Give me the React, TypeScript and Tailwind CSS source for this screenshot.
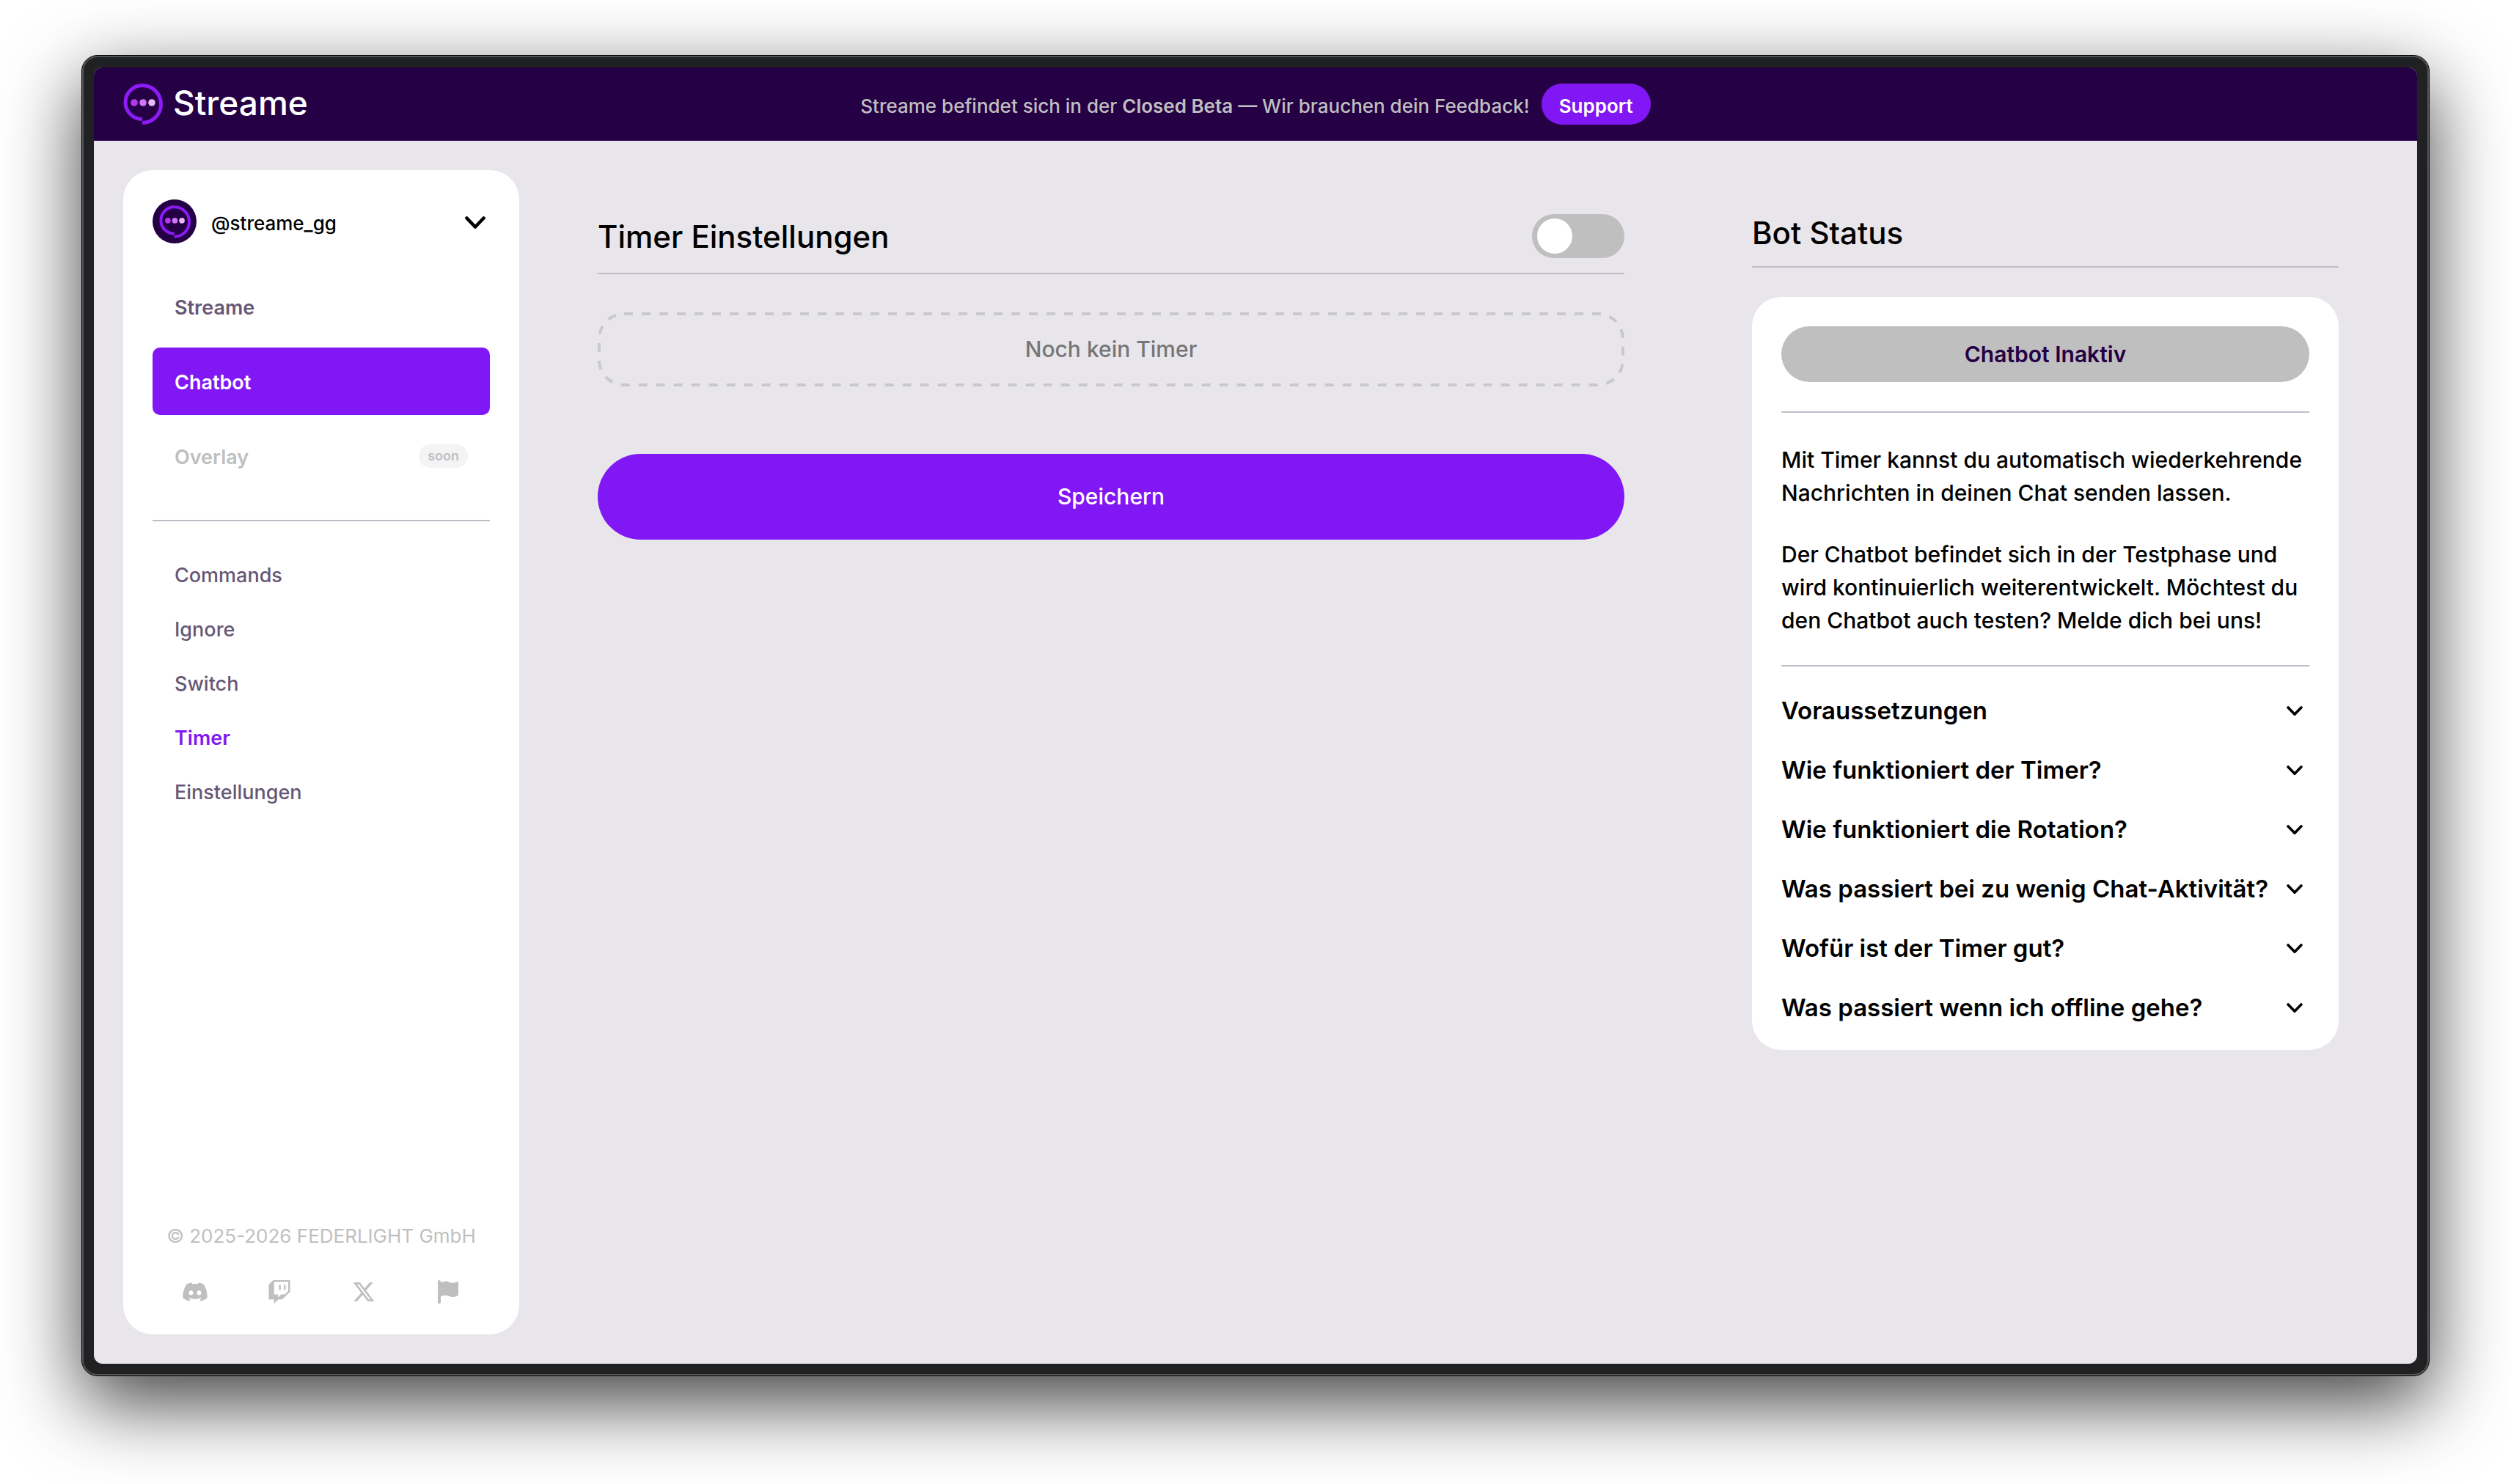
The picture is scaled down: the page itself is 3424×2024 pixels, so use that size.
import React, { useState } from 'react';
import { FaDiscord, FaTwitch, FaXTwitter, FaFlag } from 'react-icons/fa6';

const mainNav = [
  { label: 'Streame' },
  { label: 'Chatbot', active: true },
  { label: 'Overlay', soon: true },
];

const subNav = ['Commands', 'Ignore', 'Switch', 'Timer', 'Einstellungen'];

const socials = [
  { label: 'Discord', icon: FaDiscord, size: 'h-9 w-auto' },
  { label: 'Twitch', icon: FaTwitch, size: 'h-8 w-auto' },
  { label: 'X', icon: FaXTwitter, size: 'h-8 w-auto' },
  { label: 'Feedback', icon: FaFlag, size: 'h-8 w-auto' },
];

const faqs = [
  'Voraussetzungen',
  'Wie funktioniert der Timer?',
  'Wie funktioniert die Rotation?',
  'Was passiert bei zu wenig Chat-Aktivität?',
  'Wofür ist der Timer gut?',
  'Was passiert wenn ich offline gehe?',
];

const Logo: React.FC<{ className?: string }> = ({ className }) => (
  <svg viewBox="0 0 54 56" fill="none" className={className} aria-hidden="true">
    <path d="M26 2.5a23 23 0 0 0 0 46" stroke="#8c1bf6" strokeWidth="5" />
    <path d="M26 2.5a25.5 25.5 0 0 1 0 51" stroke="#8c1bf6" strokeWidth="5" />
    <circle cx="15" cy="26" r="4.8" fill="#b43af0" />
    <circle cx="27" cy="26" r="4.8" fill="#d077f5" />
    <circle cx="39" cy="26" r="4.8" fill="#e8b9fb" />
  </svg>
);

const Chevron: React.FC<{ className?: string }> = ({ className }) => (
  <svg viewBox="0 0 28 18" fill="none" className={className} aria-hidden="true">
    <path d="M2.5 2.5 14 14.5 25.5 2.5" stroke="currentColor" strokeWidth="4.6" strokeLinecap="round" strokeLinejoin="round" />
  </svg>
);

const Header: React.FC = () => (
  <header className="grid h-[100px] grid-cols-[1fr_auto_1fr] items-center bg-[#250045] px-10">
    <a href="#" className="flex items-center gap-3.5 text-white">
      <Logo className="h-14 w-[54px]" />
      <span className="pb-1 text-[46px] leading-none font-medium">Streame</span>
    </a>
    <div className="flex items-center gap-4 text-[26px] text-[#bfbfbf]">
      <p className="pt-1 font-medium">
        Streame befindet sich in der <b className="font-semibold">Closed Beta</b> — Wir brauchen dein Feedback!
      </p>
      <button className="h-14 rounded-full bg-[#8217f5] px-6 pt-1 font-semibold text-white">Support</button>
    </div>
  </header>
);

const Sidebar: React.FC = () => (
  <aside className="m-10 flex w-[540px] shrink-0 flex-col rounded-[40px] bg-white px-10 pt-10 pb-[42px] text-[27px] font-medium text-[#665775]">
    <button className="flex items-center text-black">
      <span className="flex size-15 items-center justify-center rounded-full bg-[#250045]">
        <Logo className="h-[45px] w-[43px]" />
      </span>
      <span className="ml-5 flex-1 pt-1 text-left text-[26px]">@streame_gg</span>
      <Chevron className="mt-1 mr-1.5 h-[18px] w-7" />
    </button>

    <nav className="mt-10 flex flex-col gap-2.5 font-semibold">
      {mainNav.map((item) => (
        <a
          key={item.label}
          href="#"
          className={`flex h-[92px] items-center justify-between rounded-[10px] px-[30px] ${
            item.active ? 'bg-[#8217f5] text-white' : item.soon ? 'text-[#bfbfbf]' : ''
          }`}
        >
          <span className="pt-1">{item.label}</span>
          {item.soon && <span className="rounded-full bg-[#f3f4f6] px-3 text-[18px] leading-8 font-semibold">soon</span>}
        </a>
      ))}
    </nav>

    <hr className="mt-[41px] mb-[35px] border-t-2 border-[#bfbcc8]" />

    <nav className="flex flex-col">
      {subNav.map((label) => (
        <a
          key={label}
          href="#"
          className={`flex h-[74px] items-center px-[30px] pt-1 ${label === 'Timer' ? 'font-semibold text-[#8217f5]' : ''}`}
        >
          {label}
        </a>
      ))}
    </nav>

    <footer className="mt-auto text-center text-[26px] leading-10 font-normal text-[#bfbfbf]">
      <p>© 2025-2026 FEDERLIGHT GmbH</p>
      <div className="mt-10 grid grid-cols-4 justify-items-center">
        {socials.map(({ label, icon: Icon, size }) => (
          <a key={label} href="#" aria-label={label} className="flex h-8 items-center">
            <Icon className={size} />
          </a>
        ))}
      </div>
    </footer>
  </aside>
);

const TimerSettings: React.FC = () => {
  const [enabled, setEnabled] = useState(false);

  return (
    <section className="pt-20">
      <div className="flex h-[102px] items-center justify-between border-b-2 border-[#bfbcc8]">
        <label htmlFor="timer" className="text-[42px] font-medium">
          Timer Einstellungen
        </label>
        <input
          id="timer"
          type="checkbox"
          checked={enabled}
          onChange={() => setEnabled(!enabled)}
          className="h-[60px] w-[126px] appearance-none rounded-full bg-[#bfbfbf] px-[7px] py-1.5 before:block before:size-12 before:rounded-full before:bg-white checked:bg-[#8217f5] checked:before:ml-auto"
        />
      </div>
      <div className="relative mt-13 flex h-[101px] items-center justify-center font-medium text-[#767676]">
        {/* Dashed outline */}
        <svg className="absolute inset-0 size-full" fill="none" aria-hidden="true">
          <rect
            x="2"
            y="2"
            rx="34"
            className="h-[calc(100%-4px)] w-[calc(100%-4px)]"
            stroke="#c9c9c9"
            strokeWidth="4"
            strokeDasharray="12 12"
          />
        </svg>
        <p>Noch kein Timer</p>
      </div>
      <button className="mt-[92px] h-[117px] w-full rounded-full bg-[#8217f5] font-medium text-white">Speichern</button>
    </section>
  );
};

const BotStatus: React.FC = () => (
  <section className="pt-20">
    <h2 className="flex h-[93px] items-center border-b-2 border-[#bfbcc8] text-[42px] font-medium">Bot Status</h2>
    <div className="mt-10 rounded-[40px] bg-white px-10 pt-10 pb-[17px] font-medium">
      <p className="flex h-[76px] items-center justify-center rounded-full bg-[#bfbfbf] font-semibold text-[#250045]">
        Chatbot Inaktiv
      </p>
      <hr className="mt-10 mb-[42px] border-t-2 border-[#bfbcc8]" />
      <p>Mit Timer kannst du automatisch wiederkehrende Nachrichten in deinen Chat senden lassen.</p>
      <p className="mt-[39px]">
        Der Chatbot befindet sich in der Testphase und wird kontinuierlich weiterentwickelt. Möchtest du den Chatbot
        auch testen? Melde dich bei uns!
      </p>
      <hr className="mt-[38px] mb-5 border-t-2 border-[#bfbcc8]" />
      {faqs.map((question) => (
        <button key={question} className="flex h-[81px] w-full items-center justify-between pr-[9px] text-left text-[33px] font-semibold">
          {question}
          <Chevron className="h-3.5 w-[22px]" />
        </button>
      ))}
    </div>
  </section>
);

const App: React.FC = () => {
  return (
    <div className="flex min-h-screen bg-white px-[111px] pt-[75px] pb-[147px] font-['Inter',sans-serif] text-black">
      {/* Window frame */}
      <div className="flex flex-1 rounded-[22px] border border-black bg-[#202123] shadow-[0_36px_104px_rgba(0,0,0,0.75)]">
        <div className="flex flex-1 rounded-[21px] border-2 border-[#555556] p-3.5">
          <div className="flex flex-1 flex-col overflow-hidden rounded-xl bg-[#e8e6eb]">
            <Header />
            <div className="flex flex-1">
              <Sidebar />
              <main className="grid flex-1 grid-cols-[7fr_4fr] gap-[174px] pr-[107px] pl-[67px] text-[30px] leading-[45px]">
                <TimerSettings />
                <BotStatus />
              </main>
            </div>
          </div>
        </div>
      </div>
    </div>
  );
};

export default App;
